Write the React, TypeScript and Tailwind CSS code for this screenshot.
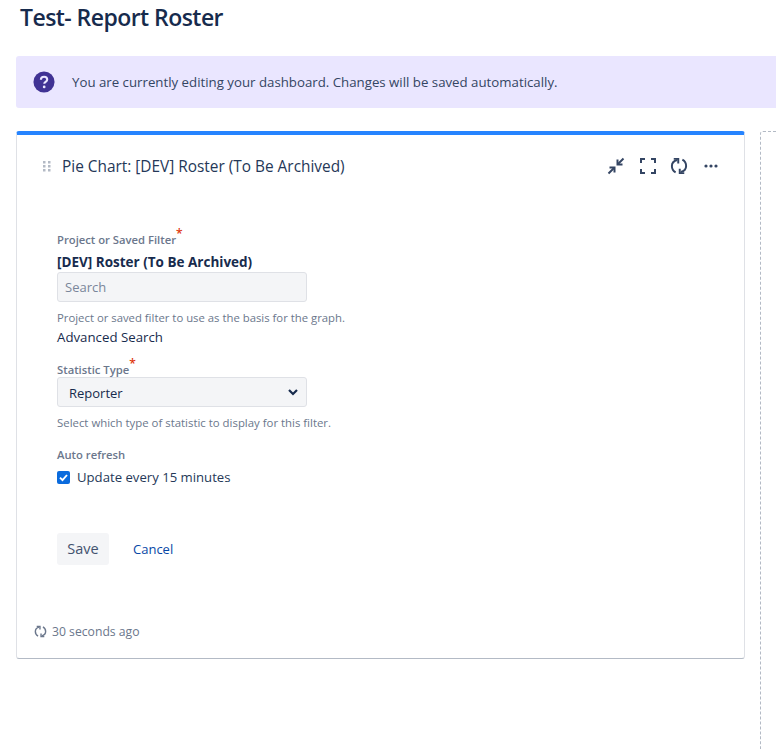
import React from "react";

function Refresh({ size, color }: { size: number; color: string }) {
  return (
    <svg width={size} height={size} viewBox="0 0 24 24" fill="none" stroke={color} strokeWidth="2.6" strokeLinejoin="miter">
      <path d="M7.5 20.5C4 18.6 2.5 15.4 2.5 12c0-3.6 2.6-6.8 7-8" />
      <path d="M5 2.5h6v6" />
      <path d="M16.5 3.5c3.5 1.9 5 5.1 5 8.5 0 3.6-2.6 6.8-7 8" />
      <path d="M19 21.5h-6v-6" />
    </svg>
  );
}

export default function App() {
  return (
    <div className="w-[776px] h-[749px] overflow-hidden bg-white font-['Open_Sans','Noto_Sans',sans-serif] text-[#172b4d]">
      <h1 className="pl-[20px] pt-[2px] h-[56px] text-[23px] leading-[30px] font-semibold tracking-[-0.55px]">Test- Report Roster</h1>
      <div className="ml-4 w-[800px] h-[52px] bg-[#eae6ff] rounded-[3px] flex items-center pl-[17px]">
        <svg width="22" height="22" viewBox="0 0 24 24">
          <circle cx="12" cy="12" r="11.5" fill="#403294" />
          <path d="M8.6 9.6c0-2 1.5-3.3 3.5-3.3s3.4 1.2 3.4 3c0 2.6-3.2 2.6-3.2 4.7" fill="none" stroke="#eae6ff" strokeWidth="2.3" />
          <circle cx="12.2" cy="17.4" r="1.5" fill="#eae6ff" />
        </svg>
        <span className="ml-[17px] pt-[1px] text-[13.25px] text-[#344563]">You are currently editing your dashboard. Changes will be saved automatically.</span>
      </div>
      <div className="flex mt-[23px] ml-4">
        <div className="shrink-0 w-[729px] h-[528px] bg-white rounded-[3px] border-t-[4px] border-t-[#2684ff] border-x border-b border-x-[#dfe1e6] border-b-[#b3bac5] flex flex-col">
          <div className="flex items-center h-[62px] pl-[26px] pr-[24px]">
            <svg width="8" height="11" viewBox="0 0 8 11" fill="#b3bac5">
              <rect x="0" y="0" width="2.5" height="2.5" /><rect x="5" y="0" width="2.5" height="2.5" />
              <rect x="0" y="4" width="2.5" height="2.5" /><rect x="5" y="4" width="2.5" height="2.5" />
              <rect x="0" y="8" width="2.5" height="2.5" /><rect x="5" y="8" width="2.5" height="2.5" />
            </svg>
            <span className="ml-[11px] pt-[1px] text-[15.4px] font-medium text-[#253858]">Pie Chart: [DEV] Roster (To Be Archived)</span>
            <div className="ml-auto flex items-center gap-[14px]">
              <svg width="18" height="18" viewBox="0 0 18 18" fill="none" stroke="#344563" strokeWidth="2" className="translate-x-[1px]">
                <path d="M16.5 1.5 11 7" /><path d="M10.5 2.5v5h5" /><path d="M1.5 16.5 7 11" /><path d="M2.5 10.5h5v5" />
              </svg>
              <svg width="18" height="18" viewBox="0 0 18 18" fill="none" stroke="#344563" strokeWidth="2" className="translate-x-[1px]">
                <path d="M2 6V2h4" /><path d="M12 2h4v4" /><path d="M16 12v4h-4" /><path d="M6 16H2v-4" />
              </svg>
              <Refresh size={18} color="#344563" />
              <svg width="18" height="18" viewBox="0 0 18 18" fill="#344563">
                <circle cx="4" cy="9" r="1.6" /><circle cx="9" cy="9" r="1.6" /><circle cx="14" cy="9" r="1.6" />
              </svg>
            </div>
          </div>
          <div className="pl-[40px] pt-[35px] flex flex-col">
            <label className="text-[11.25px] leading-[16px] font-semibold text-[#6b778c]">Project or Saved Filter<sup className="text-[#de350b] text-[12px]">*</sup></label>
            <div className="text-[13.5px] leading-[18px] mt-[5px] font-bold text-[#172b4d]">[DEV] Roster (To Be Archived)</div>
            <input readOnly placeholder="Search" className="mt-[1px] w-[250px] h-[30px] px-[7px] bg-[#f4f5f7] border border-[#dfe1e6] rounded-[3px] text-[13px] placeholder:text-[#7a869a]" />
            <div className="mt-[8px] text-[11.33px] leading-[16px] text-[#6b778c]">Project or saved filter to use as the basis for the graph.</div>
            <div className="mt-[1px] text-[13.25px] leading-[20px] text-[#172b4d]">Advanced Search</div>
            <label className="mt-[15px] text-[11.25px] leading-[16px] font-semibold text-[#6b778c]">Statistic Type<sup className="text-[#de350b] text-[12px]">*</sup></label>
            <div className="-mt-[1px] w-[250px] h-[30px] pl-[11px] pr-3 pt-[3px] bg-[#f4f5f7] border border-[#dfe1e6] rounded-[3px] flex items-center justify-between text-[13px] text-[#172b4d]">
              <span>Reporter</span>
              <svg width="12" height="12" viewBox="0 0 12 12" fill="none" stroke="#172b4d" strokeWidth="2.2" className="-mr-[5px] -mt-[3px]"><path d="M2 4l4 4 4-4" /></svg>
            </div>
            <div className="mt-[8px] text-[11.4px] leading-[16px] text-[#6b778c]">Select which type of statistic to display for this filter.</div>
            <div className="mt-[16px] text-[11.25px] leading-[16px] font-semibold text-[#6b778c]">Auto refresh</div>
            <div className="mt-[4px] flex items-center">
              <svg width="13" height="13" viewBox="0 0 13 13">
                <rect width="13" height="13" rx="2" fill="#0b6bdd" />
                <path d="M3 6.6 5.5 9.2 10 4" fill="none" stroke="#fff" strokeWidth="1.9" />
              </svg>
              <span className="ml-[7px] text-[13.15px] leading-[20px] text-[#253858]">Update every 15 minutes</span>
            </div>
            <div className="mt-[46px] flex items-center">
              <button className="w-[52px] h-[32px] bg-[#f4f5f7] rounded-[3px] text-[14.5px] text-[#42526e]">Save</button>
              <a className="ml-[24px] pt-[1px] text-[13px] text-[#0747a6]">Cancel</a>
            </div>
          </div>
          <div className="mt-auto mb-[17px] pl-[17px] flex items-center">
            <Refresh size={13} color="#6b778c" />
            <span className="ml-[5px] text-[12.2px] text-[#6b778c]">30 seconds ago</span>
          </div>
        </div>
        <div className="shrink-0 ml-[15px] w-[60px] h-[700px] border border-dashed border-[#b3bac5] rounded-[3px]" />
      </div>
    </div>
  );
}
